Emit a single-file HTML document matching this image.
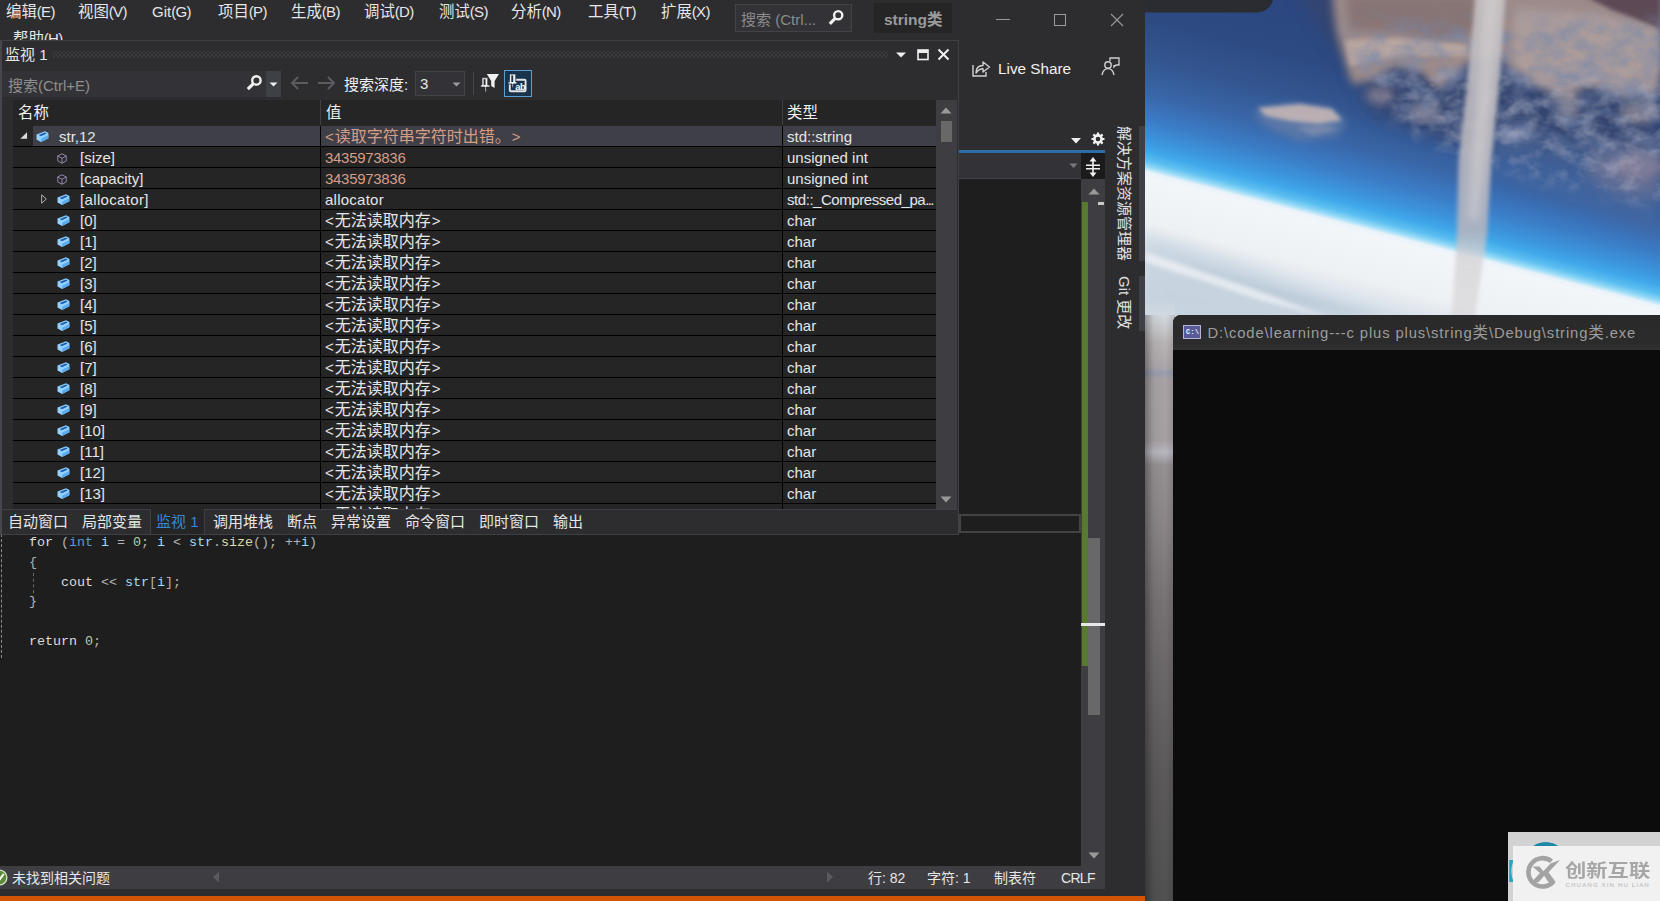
<!DOCTYPE html>
<html lang="zh-CN"><head><meta charset="utf-8"><title>VS Watch</title>
<style>
*{margin:0;padding:0;box-sizing:border-box}
html,body{width:1660px;height:901px;overflow:hidden;background:#0c0c0c}
body{position:relative;font-family:"Liberation Sans","Noto Sans CJK SC",sans-serif;font-size:15px;color:#e6e6e6;line-height:1}
.a{position:absolute}
.t{position:absolute;white-space:nowrap;line-height:20px;height:20px}
svg{position:absolute;overflow:visible}
.row{position:absolute;left:13px;width:923px;height:21px;border-bottom:1px solid #000}
.vl{position:absolute;top:0;width:1px;height:20px;background:#000}
.code{position:absolute;white-space:pre;font-family:"Liberation Mono","Noto Sans CJK SC",monospace;font-size:13.4px;letter-spacing:-0.04px;line-height:20px;height:20px;color:#c8c8c8}
.kw{color:#569cd6}.id{color:#9cdcfe}.wh{color:#dcdcdc}.nm{color:#b5cea8}.fn{color:#dcdcaa}.op{color:#b4b4b4}
</style></head>
<body>
<svg class="a" style="left:0;top:0" width="1660" height="901" viewBox="0 0 1660 901">
<defs>
<linearGradient id="sky" gradientUnits="userSpaceOnUse" x1="1196.7" y1="-23" x2="1115.6" y2="286.6">
<stop offset="0" stop-color="#2c4780"/>
<stop offset="0.156" stop-color="#2d4a82"/>
<stop offset="0.281" stop-color="#33558f"/>
<stop offset="0.39" stop-color="#3966a8"/>
<stop offset="0.469" stop-color="#3b7cc6"/>
<stop offset="0.531" stop-color="#3c95dc"/>
<stop offset="0.566" stop-color="#3fa8ea"/>
<stop offset="0.594" stop-color="#5cbff1"/>
<stop offset="0.612" stop-color="#93d9f7"/>
<stop offset="0.628" stop-color="#e9f3fa"/>
<stop offset="0.644" stop-color="#f3f6f9"/>
<stop offset="0.781" stop-color="#eef1f4"/>
<stop offset="0.875" stop-color="#d3dde7"/>
<stop offset="1" stop-color="#c9d5e0"/>
</linearGradient>
<linearGradient id="strip" gradientUnits="userSpaceOnUse" x1="0" y1="301" x2="0" y2="901">
<stop offset="0" stop-color="#d2dae2" stop-opacity="0"/>
<stop offset="0.025" stop-color="#d3d9e0" stop-opacity="1"/>
<stop offset="0.045" stop-color="#c9c9cd"/>
<stop offset="0.07" stop-color="#b9b4b5"/>
<stop offset="0.11" stop-color="#aca7aa"/>
<stop offset="0.12" stop-color="#9a9eb0"/>
<stop offset="0.132" stop-color="#a9a3a5"/>
<stop offset="0.232" stop-color="#a6a0a2"/>
<stop offset="0.252" stop-color="#b8b8c0"/>
<stop offset="0.274" stop-color="#959092"/>
<stop offset="0.365" stop-color="#8c8688"/>
<stop offset="0.498" stop-color="#777273"/>
<stop offset="0.665" stop-color="#676465"/>
<stop offset="0.795" stop-color="#5b595a"/>
<stop offset="1" stop-color="#525152"/>
</linearGradient>
<linearGradient id="stripv" gradientUnits="userSpaceOnUse" x1="1145" y1="0" x2="1174" y2="0">
<stop offset="0" stop-color="#000" stop-opacity="0.32"/>
<stop offset="0.3" stop-color="#000" stop-opacity="0.05"/>
<stop offset="0.7" stop-color="#000" stop-opacity="0"/>
<stop offset="1" stop-color="#000" stop-opacity="0.12"/>
</linearGradient>
<linearGradient id="plm" gradientUnits="userSpaceOnUse" x1="0" y1="0" x2="0" y2="320">
<stop offset="0" stop-color="#c4bfc1" stop-opacity="1"/>
<stop offset="0.72" stop-color="#b6b5be" stop-opacity="1"/>
<stop offset="0.80" stop-color="#d2d0d3" stop-opacity="0.85"/>
<stop offset="1" stop-color="#d2cfd0" stop-opacity="0.6"/>
</linearGradient>
<filter id="b2" x="-20%" y="-20%" width="140%" height="140%"><feGaussianBlur stdDeviation="2"/></filter>
<filter id="b4" x="-20%" y="-20%" width="140%" height="140%"><feGaussianBlur stdDeviation="4"/></filter>
<filter id="b8" x="-30%" y="-30%" width="160%" height="160%"><feGaussianBlur stdDeviation="8"/></filter>
<filter id="b14" x="-40%" y="-40%" width="180%" height="180%"><feGaussianBlur stdDeviation="14"/></filter>
<filter id="nz" x="0" y="0" width="100%" height="100%">
<feTurbulence type="fractalNoise" baseFrequency="0.045 0.06" numOctaves="3" seed="7" result="n"/>
<feColorMatrix in="n" type="matrix" values="0 0 0 0 0.18  0 0 0 0 0.24  0 0 0 0 0.40  2.2 0 0 0 -0.70"/>
</filter>
<filter id="nz2" x="0" y="0" width="100%" height="100%">
<feTurbulence type="fractalNoise" baseFrequency="0.05 0.07" numOctaves="3" seed="23" result="n"/>
<feColorMatrix in="n" type="matrix" values="0 0 0 0 0.60  0 0 0 0 0.58  0 0 0 0 0.66  0 2.4 0 0 -1.02"/>
</filter>
<clipPath id="pc"><rect x="1145" y="0" width="515" height="901"/></clipPath>
<mask id="tm" maskUnits="userSpaceOnUse" x="1300" y="0" width="360" height="260"><path d="M1350 20 L1362 80 L1400 120 L1470 140 L1560 150 L1680 160 L1680 20 Z" fill="#fff" filter="url(#b8)"/></mask>
<mask id="tm2" maskUnits="userSpaceOnUse" x="1300" y="0" width="360" height="260"><path d="M1360 70 L1372 100 L1420 140 L1480 165 L1560 185 L1680 210 L1680 80 Z" fill="#fff" filter="url(#b8)"/></mask>
</defs>
<g clip-path="url(#pc)">
<rect x="1145" y="0" width="515" height="320" fill="url(#sky)"/>
<!-- shadowed ocean under terrain -->
<path d="M1296 -10 L1345 -10 L1352 70 L1372 112 L1440 138 L1500 150 L1560 158 L1660 172 L1660 60 L1340 55 Z" fill="#34446e" opacity="0.92" filter="url(#b8)"/>
<path d="M1480 130 L1600 140 L1660 170 L1660 235 L1580 205 L1500 175 Z" fill="#4a699f" opacity="0.55" filter="url(#b8)"/>
<!-- terrain -->
<path d="M1332 -8 L1336 30 L1345 62 L1352 84 L1372 80 L1395 66 L1420 72 L1440 90 L1455 76 L1470 62 L1500 58 L1515 75 L1540 70 L1560 85 L1590 72 L1620 80 L1660 72 L1660 -8 Z" fill="#9d8b8a" filter="url(#b4)"/>
<path d="M1345 -5 L1475 -5 L1480 33 L1440 40 L1398 32 L1350 30 Z" fill="#84706f" opacity="0.8" filter="url(#b4)"/>
<path d="M1345 40 L1400 38 L1468 45 L1468 56 L1400 56 L1350 66 Z" fill="#b9a8a3" opacity="0.9" filter="url(#b2)"/>
<path d="M1515 8 L1600 14 L1660 30 L1660 92 L1625 98 L1590 86 L1560 96 L1530 84 L1512 60 Z" fill="#ad9e9d" opacity="0.92" filter="url(#b4)"/>
<path d="M1577 -8 L1660 -8 L1660 28 L1612 10 Z" fill="#5d4a55" filter="url(#b2)"/>
<!-- lighter blobs in mixed zone -->
<ellipse cx="1425" cy="112" rx="16" ry="10" fill="#8f8a98" opacity="0.8" filter="url(#b4)"/>
<ellipse cx="1568" cy="102" rx="11" ry="18" fill="#9a8f95" opacity="0.8" filter="url(#b4)"/>
<ellipse cx="1640" cy="112" rx="20" ry="12" fill="#8c8894" opacity="0.8" filter="url(#b4)"/>
<ellipse cx="1515" cy="132" rx="22" ry="8" fill="#6f7ea6" opacity="0.8" filter="url(#b4)"/>
<ellipse cx="1380" cy="95" rx="14" ry="10" fill="#8a8091" opacity="0.7" filter="url(#b4)"/>
<path d="M1590 150 L1660 145 L1660 200 L1620 195 L1585 175 Z" fill="#6d7294" opacity="0.8" filter="url(#b8)"/>
<ellipse cx="1638" cy="166" rx="24" ry="13" fill="#85809a" opacity="0.8" filter="url(#b4)"/>
<!-- noise texture over terrain/ocean -->
<g mask="url(#tm)"><rect x="1300" y="0" width="360" height="260" filter="url(#nz)" opacity="0.6"/></g>
<g mask="url(#tm2)"><rect x="1300" y="0" width="360" height="260" filter="url(#nz2)" opacity="0.38"/></g>
<!-- island -->
<path d="M1255 110 L1290 104 L1330 108 L1346 122 L1338 136 L1300 141 L1272 130 L1257 119 Z" fill="#5f7aa8" opacity="0.9" filter="url(#b4)"/>
<path d="M1258 108 L1300 104 L1332 109 L1342 120 L1318 124 L1290 121 L1266 116 Z" fill="#c0b2b4" filter="url(#b2)" opacity="0.95"/>
<path d="M1296 126 L1326 125 L1336 130 L1312 136 Z" fill="#8f96b0" filter="url(#b2)" opacity="0.55"/>
<!-- plume -->
<path d="M1475.5 -5 L1505.5 -5 L1499.5 80 L1491.5 160 L1487 235 L1479 290 L1474 322 L1451 322 L1453.5 290 L1457 235 L1458.5 160 L1467.5 80 Z" fill="url(#plm)" filter="url(#b2)" opacity="0.88"/>
<path d="M1484 -5 L1500 -5 L1493 80 L1486 160 L1478 220 L1468 220 L1471 160 L1478 80 Z" fill="#d8d4d4" filter="url(#b4)" opacity="0.55"/>
<!-- cloud shading lower-left -->
<path d="M1145 235 L1230 262 L1330 300 L1400 325 L1145 325 Z" fill="#c6d3df" opacity="0.8" filter="url(#b8)"/>
<path d="M1180 262 L1290 292 L1380 318 L1300 306 L1200 280 Z" fill="#b9c9d8" opacity="0.8" filter="url(#b4)"/>
<path d="M1145 252 L1250 288 L1330 318 L1260 300 L1145 262 Z" fill="#eef1f4" opacity="0.8" filter="url(#b2)"/>
<!-- left strip -->
<rect x="1145" y="301" width="30" height="600" fill="url(#strip)"/>
<rect x="1145" y="315" width="30" height="586" fill="url(#stripv)"/>
</g>
<!-- dark rounded thing at top -->
<path d="M1145 0 L1273 0 C1271 8 1264 12.5 1254 12.5 L1145 12.5 Z" fill="#2b2c32"/>
</svg>
<div class="a" style="left:1173px;top:314.6px;width:500px;height:600px;background:#0c0c0c;border-top-left-radius:8px;overflow:hidden"><div class="a" style="left:0;top:0;width:500px;height:35.6px;background:linear-gradient(#2a2a2a 0,#2b2b2b 80%,#323232 100%)"></div><div class="a" style="left:10.4px;top:10.6px;width:17.7px;height:14.2px;background:#5a5a98;border:1px solid #b4b4d6"></div><div class="t" style="left:13px;top:14px;font-size:6.6px;line-height:8px;height:8px;color:#fff;font-weight:bold;letter-spacing:0.5px;font-family:'Liberation Mono',monospace">C:\</div><div class="t" style="left:34.4px;top:8.6px;font-size:14.8px;letter-spacing:0.875px;color:#9d9d9d">D:\code\learning---c plus plus\string<span style="font-size:15.5px">类</span>\Debug\string<span style="font-size:15.5px">类</span>.exe</div></div>
<div class="a" style="left:1508px;top:832px;width:152px;height:69px;background:#d2d2d2"></div>
<svg style="left:1508px;top:832px" width="60" height="69" viewBox="0 0 60 69">
<path d="M25 14.5 A21.5 21.5 0 0 1 50.5 14.5 L47 14.5 A18 18 0 0 0 28.5 14.5 Z" fill="#1d88a8"/>
<path d="M25 14.5 C30 9 45 9 50.5 14.5 Z" fill="#1d88a8"/>
<path d="M6 28 C2.5 34 2.5 44 6 50 L1.2 50 L1.2 28 Z" fill="#27a4c4"/>
</svg>
<div class="a" style="left:1513px;top:846px;width:147px;height:55px;background:#f1f1f1"></div>
<svg style="left:1524px;top:855px" width="38" height="34" viewBox="0 0 38 34">
<path d="M27.5 6.2 A14.2 14.2 0 1 0 29.5 26.5" fill="none" stroke="#a3a3a3" stroke-width="4.6"/>
<path d="M8.5 11.5 L15.5 11.5 L19.3 16.3 L26.5 8.5 L36 5 L24.5 17.2 L31.8 27.2 L24.6 27.2 L20.2 20.8 L14.5 27.2 L7.5 27.2 L16 18 Z" fill="#a3a3a3"/>
</svg>
<div class="t" style="left:1565px;top:859.5px;font-size:21.3px;font-weight:bold;color:#a6a6a6;line-height:22px;height:22px;transform-origin:0 0;transform:scaleY(0.84);font-family:'Noto Sans CJK SC',sans-serif">创新互联</div>
<div class="t" style="left:1565.5px;top:880.5px;font-size:6.2px;color:#b4b4b4;line-height:8px;height:8px;letter-spacing:1.08px">CHUANG XIN HU LIAN</div>
<div class="a" style="left:0;top:0;width:1145px;height:901px;background:#2d2d30"></div>
<div class="a" style="left:0;top:896px;width:1145px;height:5px;background:#d25404"></div>
<div class="t" style="left:6px;top:2px"><span style="font-size:15.4px">编辑</span><span style="letter-spacing:-0.7px">(E)</span></div>
<div class="t" style="left:78px;top:2px"><span style="font-size:15.4px">视图</span><span style="letter-spacing:-0.7px">(V)</span></div>
<div class="t" style="left:152px;top:2px">Git<span style="letter-spacing:-0.7px">(G)</span></div>
<div class="t" style="left:218px;top:2px"><span style="font-size:15.4px">项目</span><span style="letter-spacing:-0.7px">(P)</span></div>
<div class="t" style="left:291px;top:2px"><span style="font-size:15.4px">生成</span><span style="letter-spacing:-0.7px">(B)</span></div>
<div class="t" style="left:364px;top:2px"><span style="font-size:15.4px">调试</span><span style="letter-spacing:-0.7px">(D)</span></div>
<div class="t" style="left:439px;top:2px"><span style="font-size:15.4px">测试</span><span style="letter-spacing:-0.7px">(S)</span></div>
<div class="t" style="left:511px;top:2px"><span style="font-size:15.4px">分析</span><span style="letter-spacing:-0.7px">(N)</span></div>
<div class="t" style="left:588px;top:2px"><span style="font-size:15.4px">工具</span><span style="letter-spacing:-0.7px">(T)</span></div>
<div class="t" style="left:661px;top:2px"><span style="font-size:15.4px">扩展</span><span style="letter-spacing:-0.7px">(X)</span></div>
<div class="t" style="left:13px;top:29px"><span style="font-size:15.4px">帮助</span><span style="letter-spacing:-0.7px">(H)</span></div>
<div class="a" style="left:735px;top:4px;width:117px;height:28px;background:#333337;border:1px solid #434347"></div>
<div class="t" style="left:741px;top:10px;color:#8a8a8a">搜索 (Ctrl...</div>
<svg style="left:827px;top:9px" width="18" height="18" viewBox="0 0 18 18"><circle cx="11.2" cy="6.2" r="4.1" fill="none" stroke="#f0f0f0" stroke-width="2.4"/><path d="M8.4 9.2 L2.8 14.8" stroke="#f0f0f0" stroke-width="3.2" stroke-linecap="butt"/></svg>
<div class="a" style="left:874px;top:3px;width:78px;height:30px;background:#252526"></div>
<div class="t" style="left:884px;top:10px;font-weight:bold;color:#9a9a9a;font-size:15.5px">string类</div>
<svg style="left:990px;top:8px" width="140" height="24" viewBox="0 0 140 24">
<path d="M6 11.5 H20" stroke="#9a9a9a" stroke-width="1"/>
<rect x="64.5" y="6.5" width="11" height="11" fill="none" stroke="#9a9a9a" stroke-width="1"/>
<path d="M121 6 L133 18 M133 6 L121 18" stroke="#9a9a9a" stroke-width="1.1"/>
</svg>
<svg style="left:971px;top:59px" width="22" height="20" viewBox="0 0 22 20">
<path d="M2 6 V17 H15 V13" fill="none" stroke="#d0d0d0" stroke-width="1.4"/>
<path d="M5 14 C5 9 8 6.5 12 6.5 V3 L18.5 8 L12 13 V9.8 C9 9.8 7 11 5 14 Z" fill="none" stroke="#d0d0d0" stroke-width="1.4" stroke-linejoin="round"/>
</svg>
<div class="t" style="left:998px;top:59px;font-size:15.3px;color:#f0f0f0">Live Share</div>
<svg style="left:1100px;top:56px" width="22" height="22" viewBox="0 0 22 22">
<circle cx="8" cy="9" r="3.2" fill="none" stroke="#d0d0d0" stroke-width="1.4"/>
<path d="M2 19 C3 14 6 12.6 8 12.6 C10 12.6 13 14 14 19" fill="none" stroke="#d0d0d0" stroke-width="1.4"/>
<path d="M10 5 V2 H19 V9 H16 L14 11 V9" fill="none" stroke="#d0d0d0" stroke-width="1.3"/>
</svg>
<svg style="left:1070px;top:131px" width="36" height="16" viewBox="0 0 36 16">
<path d="M1 7 H11 L6 12.5 Z" fill="#f0f0f0"/>
<circle cx="28" cy="8" r="3.6" fill="none" stroke="#f0f0f0" stroke-width="2.6"/>
<g stroke="#f0f0f0" stroke-width="2.2"><path d="M28 1.5 V4 M28 12 V14.5 M21.5 8 H24 M32 8 H34.5 M23.4 3.4 L25.2 5.2 M30.8 10.8 L32.6 12.6 M23.4 12.6 L25.2 10.8 M30.8 5.2 L32.6 3.4"/></g>
</svg>
<div class="a" style="left:959px;top:150px;width:146px;height:3px;background:#2d6ca8"></div>
<div class="a" style="left:959px;top:153px;width:122px;height:26px;background:#333337;border-bottom:1px solid #46464a"></div>
<svg style="left:1069px;top:163px" width="9" height="5.4" viewBox="0 0 10 6"><path d="M0.5 0.5 H9.5 L5 5.5 Z" fill="#7a7a7a"/></svg>
<div class="a" style="left:1081px;top:153px;width:24px;height:26px;background:#1b1b1c"></div>
<svg style="left:1084px;top:157px" width="18" height="20" viewBox="0 0 18 20"><g stroke="#f0f0f0" fill="none"><path d="M2 8.2 H16 M2 11.8 H16" stroke-width="1.6"/><path d="M9 2 V18" stroke-width="1.6"/></g><path d="M9 0 L12.5 4.5 H5.5 Z M9 20 L12.5 15.5 H5.5 Z" fill="#f0f0f0"/></svg>
<div class="a" style="left:0;top:179px;width:1081px;height:687px;background:#1e1e1e"></div>
<div class="a" style="left:1081px;top:179px;width:24px;height:687px;background:#3e3e42"></div>
<div class="a" style="left:1082px;top:202px;width:6px;height:464px;background:#577a2c"></div>
<svg style="left:1088px;top:188px" width="12" height="7" viewBox="0 0 12 7"><path d="M6 0.5 L11.5 6.5 H0.5 Z" fill="#999"/></svg>
<div class="a" style="left:1098px;top:202px;width:6px;height:3px;background:#c8c8c8"></div>
<div class="a" style="left:1088px;top:538px;width:12px;height:177px;background:#686868"></div>
<div class="a" style="left:1081px;top:623px;width:24px;height:3px;background:#e8e8e8"></div>
<svg style="left:1088px;top:852px" width="12" height="7" viewBox="0 0 12 7"><path d="M0.5 0.5 H11.5 L6 6.5 Z" fill="#999"/></svg>
<div class="a" style="left:959px;top:514px;width:122px;height:19px;background:#1e1e1e;border:2px solid #434346"></div>
<div class="a" style="left:1139px;top:126px;width:6px;height:135px;background:#3f3f46"></div>
<div class="a" style="left:1139px;top:276px;width:6px;height:55px;background:#3f3f46"></div>
<div class="t" style="left:1134px;top:126px;transform-origin:0 0;transform:rotate(90deg);color:#e0e0e0">解决方案资源管理器</div>
<div class="t" style="left:1134px;top:276px;transform-origin:0 0;transform:rotate(90deg);color:#e0e0e0">Git 更改</div>
<div class="code" style="left:29px;top:533px"><span class="wh">for</span> <span class="op">(</span><span class="kw">int</span> <span class="id">i</span> <span class="op">=</span> <span class="nm">0</span><span class="op">;</span> <span class="id">i</span> <span class="op">&lt;</span> <span class="id">str</span><span class="op">.</span><span class="fn">size</span><span class="op">();</span> <span class="op">++</span><span class="id">i</span><span class="op">)</span></div>
<div class="code" style="left:29px;top:553px"><span class="op">{</span></div>
<div class="code" style="left:61px;top:573px"><span class="wh">cout</span> <span class="op">&lt;&lt;</span> <span class="id">str</span><span class="op">[</span><span class="id">i</span><span class="op">];</span></div>
<div class="code" style="left:29px;top:592px"><span class="op">}</span></div>
<div class="code" style="left:29px;top:632px"><span class="wh">return</span> <span class="nm">0</span><span class="op">;</span></div>
<div class="a" style="left:1px;top:534px;width:0;height:124px;border-left:1px dashed #8a8a8a"></div>
<div class="a" style="left:33px;top:573px;width:0;height:20px;border-left:1px dashed #6a6a6a"></div>
<div class="a" style="left:0;top:866px;width:1105px;height:23px;background:#3e3e42"></div>
<svg style="left:-9.5px;top:868.5px" width="17" height="17" viewBox="0 0 17 17"><circle cx="8.5" cy="8.5" r="7.4" fill="#5b8a3a" stroke="#d5e3c8" stroke-width="1.3"/><path d="M4.5 9 L7.5 12 L12.8 4.8" fill="none" stroke="#f4f8f0" stroke-width="2"/></svg>
<div class="t" style="left:12px;top:868px;font-size:14px">未找到相关问题</div>
<svg style="left:212px;top:871px" width="8" height="12" viewBox="0 0 8 12"><path d="M7 0.5 V11.5 L1 6 Z" fill="#5a5a5e"/></svg>
<svg style="left:826px;top:871px" width="8" height="12" viewBox="0 0 8 12"><path d="M1 0.5 V11.5 L7 6 Z" fill="#5a5a5e"/></svg>
<div class="t" style="left:868px;top:868px;font-size:14px">行: 82</div>
<div class="t" style="left:927px;top:868px;font-size:14px">字符: 1</div>
<div class="t" style="left:994px;top:868px;font-size:14px">制表符</div>
<div class="t" style="left:1061px;top:868px;font-size:14px;letter-spacing:-0.7px">CRLF</div>
<div class="a" style="left:0;top:40px;width:959px;height:495px;background:#2d2d30;border:1px solid #3f3f46;border-left:2px solid #46464c"></div>
<div class="t" style="left:5px;top:45px">监视 1</div>
<div class="a" style="left:52px;top:51px;width:836px;height:7px;opacity:0.3;background-image:radial-gradient(circle,#5a5a60 0.8px,transparent 1.1px),radial-gradient(circle,#5a5a60 0.8px,transparent 1.1px);background-size:4px 4px;background-position:0 0,2px 2px"></div>
<svg style="left:894px;top:47px" width="58" height="15" viewBox="0 0 58 15">
<path d="M2 5.5 H12 L7 10.5 Z" fill="#f0f0f0"/>
<rect x="24" y="3" width="10" height="9.5" fill="none" stroke="#f0f0f0" stroke-width="1.6"/><rect x="24" y="3" width="10" height="3" fill="#f0f0f0"/>
<path d="M44.5 2.5 L54.5 12.5 M54.5 2.5 L44.5 12.5" stroke="#f0f0f0" stroke-width="2"/>
</svg>
<div class="a" style="left:2px;top:71px;width:279px;height:26px;background:#333337"></div>
<div class="a" style="left:266px;top:71px;width:15px;height:26px;background:#3f3f46"></div>
<div class="t" style="left:8px;top:76px;color:#8e8e8e">搜索(Ctrl+E)</div>
<svg style="left:245px;top:74px" width="18" height="18" viewBox="0 0 18 18"><circle cx="11.4" cy="6.4" r="4.2" fill="none" stroke="#f0f0f0" stroke-width="2.4"/><path d="M8.4 9.6 L2.8 15.2" stroke="#f0f0f0" stroke-width="3.2" stroke-linecap="butt"/></svg>
<svg style="left:269px;top:82px" width="9" height="5" viewBox="0 0 9 5"><path d="M0.5 0.5 H8.5 L4.5 4.5 Z" fill="#f0f0f0"/></svg>
<svg style="left:289px;top:75px" width="48" height="16" viewBox="0 0 48 16"><g fill="none" stroke="#5c5c60" stroke-width="2"><path d="M19 8 H3 M9 2 L3 8 L9 14"/><path d="M29 8 H45 M39 2 L45 8 L39 14"/></g></svg>
<div class="t" style="left:344px;top:75px;color:#f0f0f0">搜索深度:</div>
<div class="a" style="left:415px;top:71px;width:50px;height:25px;background:#333337;border:1px solid #434346"></div>
<div class="t" style="left:420px;top:74px">3</div>
<svg style="left:452px;top:82px" width="9" height="5" viewBox="0 0 9 5"><path d="M0.5 0.5 H8.5 L4.5 4.5 Z" fill="#999"/></svg>
<div class="a" style="left:473px;top:72px;width:1px;height:23px;background:#46464a"></div>
<svg style="left:480px;top:72px" width="20" height="20" viewBox="0 0 20 20">
<path d="M6.8 2 H19 L14.6 9 V16 L11.2 14 V9 Z" fill="#f0f0f0"/>
<path d="M2 5.8 H7.7 V13 H9.8 V15 H6.2 V19.8 H5 V15 H0.8 V13 H2 Z" fill="#f0f0f0" stroke="#2d2d30" stroke-width="0.6"/>
<rect x="3.6" y="7.2" width="1.9" height="5.8" fill="#2d2d30"/>
</svg>
<div class="a" style="left:504px;top:70px;width:27.5px;height:27px;background:#18344d;border:1px solid #5b9fd0"></div>
<svg style="left:504px;top:70px" width="28" height="27" viewBox="0 0 28 27">
<rect x="5.8" y="9.8" width="15.8" height="11.4" rx="1" fill="none" stroke="#e4e4e4" stroke-width="1.9"/>
<path d="M5.5 4 H11.8 V12 H13 V14 H9.3 V17.6 H8 V14 H4 V12 H5.5 Z" fill="#f0f0f0" stroke="#18344d" stroke-width="0.8"/>
<rect x="7.3" y="5.4" width="1.9" height="6.6" fill="#18344d"/>
<text x="11.2" y="19.6" font-family="Liberation Sans, sans-serif" font-size="9.2" font-weight="bold" fill="#ffffff" letter-spacing="-0.4">ab</text>
</svg>
<div class="a" style="left:13px;top:100px;width:923px;height:409px;background:#252526"></div>
<div class="a" style="left:320px;top:100px;width:1px;height:25px;background:#3f3f46"></div>
<div class="a" style="left:782px;top:100px;width:1px;height:25px;background:#3f3f46"></div>
<div class="t" style="left:18px;top:103px;font-size:15.4px;color:#f0f0f0">名称</div>
<div class="t" style="left:326px;top:103px;font-size:15.4px;color:#f0f0f0">值</div>
<div class="t" style="left:787px;top:103px;font-size:15.4px;color:#f0f0f0">类型</div>
<div class="row" style="top:126px"><div class="a" style="left:20px;top:0;width:903px;height:20px;background:#3f3f47"></div><svg style="left:7px;top:6px" width="7.5" height="7" viewBox="0 0 8 7"><path d="M7.5 0 V7 H0.3 Z" fill="#dcdcdc"/></svg><svg style="left:23px;top:4.5px" width="13" height="11.6" viewBox="0 0 14 13"><path d="M9.8 0.3 L13.6 2.3 V8 L5.4 12.3 L0.3 9.6 V4 Z" fill="#93d2ff"/><path d="M5.4 8.6 L13.6 4.6 V8 L5.4 12.3 Z" fill="#5aaaf0"/><path d="M9.6 1.6 L11.8 2.8 L5.2 5.9 L2.8 4.6 Z" fill="#1c5fa8"/></svg><div class="t" style="left:46px;top:1px">str,12</div><div class="vl" style="left:307px"></div><div class="vl" style="left:769px"></div><div class="t" style="left:312px;top:1px;color:#d69d85"><span style="margin-right:1px">&lt;</span><span style="font-size:16px">读取字符串字符时出错。</span><span style="margin-left:1px">&gt;</span></div><div class="t" style="left:774px;top:1px">std::string</div></div>
<div class="row" style="top:147px"><svg style="left:44px;top:5.5px" width="10" height="11" viewBox="0 0 11 12"><path d="M5.5 0.8 L10.2 3.2 V8.6 L5.5 11.2 L0.8 8.6 V3.2 Z M0.8 3.2 L5.5 5.8 L10.2 3.2 M5.5 5.8 V11.2" fill="none" stroke="#9a90b6" stroke-width="1" stroke-linejoin="round"/></svg><div class="t" style="left:67px;top:1px">[size]</div><div class="vl" style="left:307px"></div><div class="vl" style="left:769px"></div><div class="t" style="left:312px;top:1px;color:#d69d85"><span style="letter-spacing:-0.3px">3435973836</span></div><div class="t" style="left:774px;top:1px">unsigned int</div></div>
<div class="row" style="top:168px"><svg style="left:44px;top:5.5px" width="10" height="11" viewBox="0 0 11 12"><path d="M5.5 0.8 L10.2 3.2 V8.6 L5.5 11.2 L0.8 8.6 V3.2 Z M0.8 3.2 L5.5 5.8 L10.2 3.2 M5.5 5.8 V11.2" fill="none" stroke="#9a90b6" stroke-width="1" stroke-linejoin="round"/></svg><div class="t" style="left:67px;top:1px">[capacity]</div><div class="vl" style="left:307px"></div><div class="vl" style="left:769px"></div><div class="t" style="left:312px;top:1px;color:#d69d85"><span style="letter-spacing:-0.3px">3435973836</span></div><div class="t" style="left:774px;top:1px">unsigned int</div></div>
<div class="row" style="top:189px"><svg style="left:44px;top:4.5px" width="13" height="11.6" viewBox="0 0 14 13"><path d="M9.8 0.3 L13.6 2.3 V8 L5.4 12.3 L0.3 9.6 V4 Z" fill="#93d2ff"/><path d="M5.4 8.6 L13.6 4.6 V8 L5.4 12.3 Z" fill="#5aaaf0"/><path d="M9.6 1.6 L11.8 2.8 L5.2 5.9 L2.8 4.6 Z" fill="#1c5fa8"/></svg><svg style="left:28px;top:5px" width="6" height="10" viewBox="0 0 6 10"><path d="M0.7 0.8 L5.3 5 L0.7 9.2 Z" fill="none" stroke="#b0b0b0" stroke-width="1"/></svg><div class="t" style="left:67px;top:1px"><span style="letter-spacing:0.35px">[allocator]</span></div><div class="vl" style="left:307px"></div><div class="vl" style="left:769px"></div><div class="t" style="left:312px;top:1px;color:#e6e6e6"><span style="letter-spacing:0.25px">allocator</span></div><div class="t" style="left:774px;top:1px"><span style="letter-spacing:-0.45px">std::_Compressed_pa</span><span style="letter-spacing:-1.7px">...</span></div></div>
<div class="row" style="top:210px"><svg style="left:44px;top:4.5px" width="13" height="11.6" viewBox="0 0 14 13"><path d="M9.8 0.3 L13.6 2.3 V8 L5.4 12.3 L0.3 9.6 V4 Z" fill="#93d2ff"/><path d="M5.4 8.6 L13.6 4.6 V8 L5.4 12.3 Z" fill="#5aaaf0"/><path d="M9.6 1.6 L11.8 2.8 L5.2 5.9 L2.8 4.6 Z" fill="#1c5fa8"/></svg><div class="t" style="left:67px;top:1px">[0]</div><div class="vl" style="left:307px"></div><div class="vl" style="left:769px"></div><div class="t" style="left:312px;top:1px;color:#e6e6e6"><span style="margin-right:1px">&lt;</span><span style="font-size:16px">无法读取内存</span><span style="margin-left:1px">&gt;</span></div><div class="t" style="left:774px;top:1px">char</div></div>
<div class="row" style="top:231px"><svg style="left:44px;top:4.5px" width="13" height="11.6" viewBox="0 0 14 13"><path d="M9.8 0.3 L13.6 2.3 V8 L5.4 12.3 L0.3 9.6 V4 Z" fill="#93d2ff"/><path d="M5.4 8.6 L13.6 4.6 V8 L5.4 12.3 Z" fill="#5aaaf0"/><path d="M9.6 1.6 L11.8 2.8 L5.2 5.9 L2.8 4.6 Z" fill="#1c5fa8"/></svg><div class="t" style="left:67px;top:1px">[1]</div><div class="vl" style="left:307px"></div><div class="vl" style="left:769px"></div><div class="t" style="left:312px;top:1px;color:#e6e6e6"><span style="margin-right:1px">&lt;</span><span style="font-size:16px">无法读取内存</span><span style="margin-left:1px">&gt;</span></div><div class="t" style="left:774px;top:1px">char</div></div>
<div class="row" style="top:252px"><svg style="left:44px;top:4.5px" width="13" height="11.6" viewBox="0 0 14 13"><path d="M9.8 0.3 L13.6 2.3 V8 L5.4 12.3 L0.3 9.6 V4 Z" fill="#93d2ff"/><path d="M5.4 8.6 L13.6 4.6 V8 L5.4 12.3 Z" fill="#5aaaf0"/><path d="M9.6 1.6 L11.8 2.8 L5.2 5.9 L2.8 4.6 Z" fill="#1c5fa8"/></svg><div class="t" style="left:67px;top:1px">[2]</div><div class="vl" style="left:307px"></div><div class="vl" style="left:769px"></div><div class="t" style="left:312px;top:1px;color:#e6e6e6"><span style="margin-right:1px">&lt;</span><span style="font-size:16px">无法读取内存</span><span style="margin-left:1px">&gt;</span></div><div class="t" style="left:774px;top:1px">char</div></div>
<div class="row" style="top:273px"><svg style="left:44px;top:4.5px" width="13" height="11.6" viewBox="0 0 14 13"><path d="M9.8 0.3 L13.6 2.3 V8 L5.4 12.3 L0.3 9.6 V4 Z" fill="#93d2ff"/><path d="M5.4 8.6 L13.6 4.6 V8 L5.4 12.3 Z" fill="#5aaaf0"/><path d="M9.6 1.6 L11.8 2.8 L5.2 5.9 L2.8 4.6 Z" fill="#1c5fa8"/></svg><div class="t" style="left:67px;top:1px">[3]</div><div class="vl" style="left:307px"></div><div class="vl" style="left:769px"></div><div class="t" style="left:312px;top:1px;color:#e6e6e6"><span style="margin-right:1px">&lt;</span><span style="font-size:16px">无法读取内存</span><span style="margin-left:1px">&gt;</span></div><div class="t" style="left:774px;top:1px">char</div></div>
<div class="row" style="top:294px"><svg style="left:44px;top:4.5px" width="13" height="11.6" viewBox="0 0 14 13"><path d="M9.8 0.3 L13.6 2.3 V8 L5.4 12.3 L0.3 9.6 V4 Z" fill="#93d2ff"/><path d="M5.4 8.6 L13.6 4.6 V8 L5.4 12.3 Z" fill="#5aaaf0"/><path d="M9.6 1.6 L11.8 2.8 L5.2 5.9 L2.8 4.6 Z" fill="#1c5fa8"/></svg><div class="t" style="left:67px;top:1px">[4]</div><div class="vl" style="left:307px"></div><div class="vl" style="left:769px"></div><div class="t" style="left:312px;top:1px;color:#e6e6e6"><span style="margin-right:1px">&lt;</span><span style="font-size:16px">无法读取内存</span><span style="margin-left:1px">&gt;</span></div><div class="t" style="left:774px;top:1px">char</div></div>
<div class="row" style="top:315px"><svg style="left:44px;top:4.5px" width="13" height="11.6" viewBox="0 0 14 13"><path d="M9.8 0.3 L13.6 2.3 V8 L5.4 12.3 L0.3 9.6 V4 Z" fill="#93d2ff"/><path d="M5.4 8.6 L13.6 4.6 V8 L5.4 12.3 Z" fill="#5aaaf0"/><path d="M9.6 1.6 L11.8 2.8 L5.2 5.9 L2.8 4.6 Z" fill="#1c5fa8"/></svg><div class="t" style="left:67px;top:1px">[5]</div><div class="vl" style="left:307px"></div><div class="vl" style="left:769px"></div><div class="t" style="left:312px;top:1px;color:#e6e6e6"><span style="margin-right:1px">&lt;</span><span style="font-size:16px">无法读取内存</span><span style="margin-left:1px">&gt;</span></div><div class="t" style="left:774px;top:1px">char</div></div>
<div class="row" style="top:336px"><svg style="left:44px;top:4.5px" width="13" height="11.6" viewBox="0 0 14 13"><path d="M9.8 0.3 L13.6 2.3 V8 L5.4 12.3 L0.3 9.6 V4 Z" fill="#93d2ff"/><path d="M5.4 8.6 L13.6 4.6 V8 L5.4 12.3 Z" fill="#5aaaf0"/><path d="M9.6 1.6 L11.8 2.8 L5.2 5.9 L2.8 4.6 Z" fill="#1c5fa8"/></svg><div class="t" style="left:67px;top:1px">[6]</div><div class="vl" style="left:307px"></div><div class="vl" style="left:769px"></div><div class="t" style="left:312px;top:1px;color:#e6e6e6"><span style="margin-right:1px">&lt;</span><span style="font-size:16px">无法读取内存</span><span style="margin-left:1px">&gt;</span></div><div class="t" style="left:774px;top:1px">char</div></div>
<div class="row" style="top:357px"><svg style="left:44px;top:4.5px" width="13" height="11.6" viewBox="0 0 14 13"><path d="M9.8 0.3 L13.6 2.3 V8 L5.4 12.3 L0.3 9.6 V4 Z" fill="#93d2ff"/><path d="M5.4 8.6 L13.6 4.6 V8 L5.4 12.3 Z" fill="#5aaaf0"/><path d="M9.6 1.6 L11.8 2.8 L5.2 5.9 L2.8 4.6 Z" fill="#1c5fa8"/></svg><div class="t" style="left:67px;top:1px">[7]</div><div class="vl" style="left:307px"></div><div class="vl" style="left:769px"></div><div class="t" style="left:312px;top:1px;color:#e6e6e6"><span style="margin-right:1px">&lt;</span><span style="font-size:16px">无法读取内存</span><span style="margin-left:1px">&gt;</span></div><div class="t" style="left:774px;top:1px">char</div></div>
<div class="row" style="top:378px"><svg style="left:44px;top:4.5px" width="13" height="11.6" viewBox="0 0 14 13"><path d="M9.8 0.3 L13.6 2.3 V8 L5.4 12.3 L0.3 9.6 V4 Z" fill="#93d2ff"/><path d="M5.4 8.6 L13.6 4.6 V8 L5.4 12.3 Z" fill="#5aaaf0"/><path d="M9.6 1.6 L11.8 2.8 L5.2 5.9 L2.8 4.6 Z" fill="#1c5fa8"/></svg><div class="t" style="left:67px;top:1px">[8]</div><div class="vl" style="left:307px"></div><div class="vl" style="left:769px"></div><div class="t" style="left:312px;top:1px;color:#e6e6e6"><span style="margin-right:1px">&lt;</span><span style="font-size:16px">无法读取内存</span><span style="margin-left:1px">&gt;</span></div><div class="t" style="left:774px;top:1px">char</div></div>
<div class="row" style="top:399px"><svg style="left:44px;top:4.5px" width="13" height="11.6" viewBox="0 0 14 13"><path d="M9.8 0.3 L13.6 2.3 V8 L5.4 12.3 L0.3 9.6 V4 Z" fill="#93d2ff"/><path d="M5.4 8.6 L13.6 4.6 V8 L5.4 12.3 Z" fill="#5aaaf0"/><path d="M9.6 1.6 L11.8 2.8 L5.2 5.9 L2.8 4.6 Z" fill="#1c5fa8"/></svg><div class="t" style="left:67px;top:1px">[9]</div><div class="vl" style="left:307px"></div><div class="vl" style="left:769px"></div><div class="t" style="left:312px;top:1px;color:#e6e6e6"><span style="margin-right:1px">&lt;</span><span style="font-size:16px">无法读取内存</span><span style="margin-left:1px">&gt;</span></div><div class="t" style="left:774px;top:1px">char</div></div>
<div class="row" style="top:420px"><svg style="left:44px;top:4.5px" width="13" height="11.6" viewBox="0 0 14 13"><path d="M9.8 0.3 L13.6 2.3 V8 L5.4 12.3 L0.3 9.6 V4 Z" fill="#93d2ff"/><path d="M5.4 8.6 L13.6 4.6 V8 L5.4 12.3 Z" fill="#5aaaf0"/><path d="M9.6 1.6 L11.8 2.8 L5.2 5.9 L2.8 4.6 Z" fill="#1c5fa8"/></svg><div class="t" style="left:67px;top:1px">[10]</div><div class="vl" style="left:307px"></div><div class="vl" style="left:769px"></div><div class="t" style="left:312px;top:1px;color:#e6e6e6"><span style="margin-right:1px">&lt;</span><span style="font-size:16px">无法读取内存</span><span style="margin-left:1px">&gt;</span></div><div class="t" style="left:774px;top:1px">char</div></div>
<div class="row" style="top:441px"><svg style="left:44px;top:4.5px" width="13" height="11.6" viewBox="0 0 14 13"><path d="M9.8 0.3 L13.6 2.3 V8 L5.4 12.3 L0.3 9.6 V4 Z" fill="#93d2ff"/><path d="M5.4 8.6 L13.6 4.6 V8 L5.4 12.3 Z" fill="#5aaaf0"/><path d="M9.6 1.6 L11.8 2.8 L5.2 5.9 L2.8 4.6 Z" fill="#1c5fa8"/></svg><div class="t" style="left:67px;top:1px">[11]</div><div class="vl" style="left:307px"></div><div class="vl" style="left:769px"></div><div class="t" style="left:312px;top:1px;color:#e6e6e6"><span style="margin-right:1px">&lt;</span><span style="font-size:16px">无法读取内存</span><span style="margin-left:1px">&gt;</span></div><div class="t" style="left:774px;top:1px">char</div></div>
<div class="row" style="top:462px"><svg style="left:44px;top:4.5px" width="13" height="11.6" viewBox="0 0 14 13"><path d="M9.8 0.3 L13.6 2.3 V8 L5.4 12.3 L0.3 9.6 V4 Z" fill="#93d2ff"/><path d="M5.4 8.6 L13.6 4.6 V8 L5.4 12.3 Z" fill="#5aaaf0"/><path d="M9.6 1.6 L11.8 2.8 L5.2 5.9 L2.8 4.6 Z" fill="#1c5fa8"/></svg><div class="t" style="left:67px;top:1px">[12]</div><div class="vl" style="left:307px"></div><div class="vl" style="left:769px"></div><div class="t" style="left:312px;top:1px;color:#e6e6e6"><span style="margin-right:1px">&lt;</span><span style="font-size:16px">无法读取内存</span><span style="margin-left:1px">&gt;</span></div><div class="t" style="left:774px;top:1px">char</div></div>
<div class="row" style="top:483px"><svg style="left:44px;top:4.5px" width="13" height="11.6" viewBox="0 0 14 13"><path d="M9.8 0.3 L13.6 2.3 V8 L5.4 12.3 L0.3 9.6 V4 Z" fill="#93d2ff"/><path d="M5.4 8.6 L13.6 4.6 V8 L5.4 12.3 Z" fill="#5aaaf0"/><path d="M9.6 1.6 L11.8 2.8 L5.2 5.9 L2.8 4.6 Z" fill="#1c5fa8"/></svg><div class="t" style="left:67px;top:1px">[13]</div><div class="vl" style="left:307px"></div><div class="vl" style="left:769px"></div><div class="t" style="left:312px;top:1px;color:#e6e6e6"><span style="margin-right:1px">&lt;</span><span style="font-size:16px">无法读取内存</span><span style="margin-left:1px">&gt;</span></div><div class="t" style="left:774px;top:1px">char</div></div>
<div class="row" style="top:504px"><svg style="left:44px;top:4.5px" width="13" height="11.6" viewBox="0 0 14 13"><path d="M9.8 0.3 L13.6 2.3 V8 L5.4 12.3 L0.3 9.6 V4 Z" fill="#93d2ff"/><path d="M5.4 8.6 L13.6 4.6 V8 L5.4 12.3 Z" fill="#5aaaf0"/><path d="M9.6 1.6 L11.8 2.8 L5.2 5.9 L2.8 4.6 Z" fill="#1c5fa8"/></svg><div class="t" style="left:67px;top:1px">[14]</div><div class="vl" style="left:307px"></div><div class="vl" style="left:769px"></div><div class="t" style="left:312px;top:1px;color:#e6e6e6"><span style="margin-right:1px">&lt;</span><span style="font-size:16px">无法读取内存</span><span style="margin-left:1px">&gt;</span></div><div class="t" style="left:774px;top:1px">char</div></div>
<div class="a" style="left:936px;top:100px;width:21px;height:409px;background:#3e3e42"></div>
<svg style="left:940px;top:107px" width="12" height="7" viewBox="0 0 12 7"><path d="M6 0.5 L11.5 6.5 H0.5 Z" fill="#999"/></svg>
<div class="a" style="left:941px;top:121px;width:11px;height:21px;background:#686868"></div>
<svg style="left:940px;top:496px" width="12" height="7" viewBox="0 0 12 7"><path d="M0.5 0.5 H11.5 L6 6.5 Z" fill="#999"/></svg>
<div class="a" style="left:2px;top:509px;width:956px;height:25px;background:#2d2d30;border-top:1px solid #3f3f46"></div>
<div class="a" style="left:150px;top:509px;width:55px;height:25px;background:#252526;border-left:1px solid #3f3f46;border-right:1px solid #3f3f46"></div>
<div class="t" style="left:8px;top:512px;color:#e6e6e6">自动窗口</div>
<div class="t" style="left:82px;top:512px;color:#e6e6e6">局部变量</div>
<div class="t" style="left:156px;top:512px;color:#3389d4">监视 1</div>
<div class="t" style="left:213px;top:512px;color:#e6e6e6">调用堆栈</div>
<div class="t" style="left:287px;top:512px;color:#e6e6e6">断点</div>
<div class="t" style="left:331px;top:512px;color:#e6e6e6">异常设置</div>
<div class="t" style="left:405px;top:512px;color:#e6e6e6">命令窗口</div>
<div class="t" style="left:479px;top:512px;color:#e6e6e6">即时窗口</div>
<div class="t" style="left:553px;top:512px;color:#e6e6e6">输出</div>
</body></html>
